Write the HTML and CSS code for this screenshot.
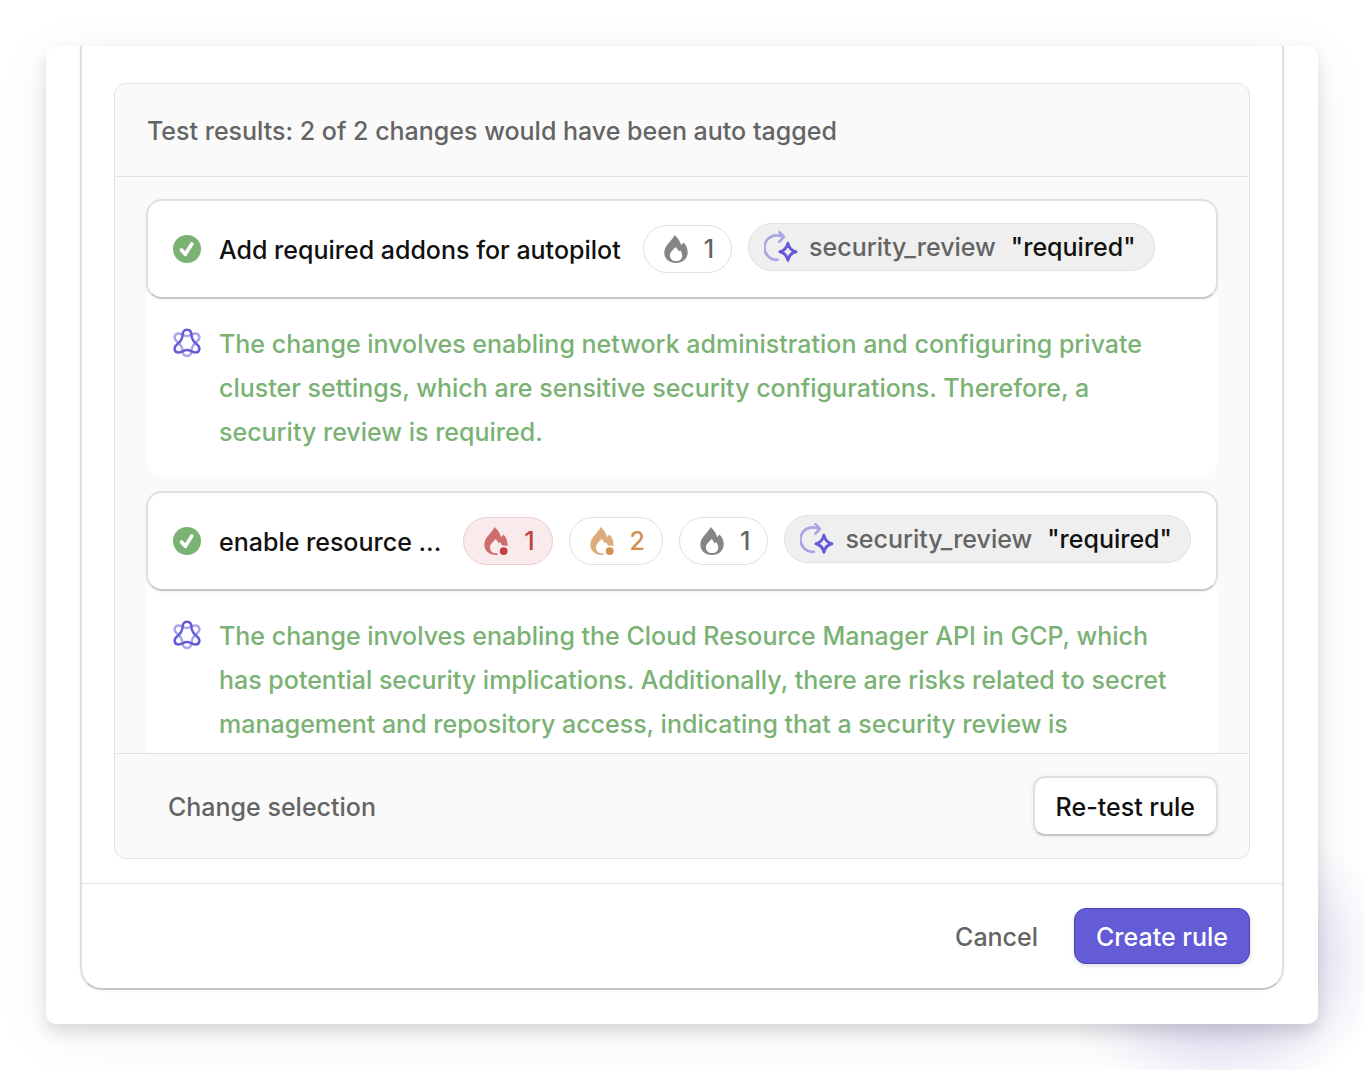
FILE: index.html
```html
<!DOCTYPE html>
<html lang="en">
<head>
<meta charset="utf-8">
<meta name="viewport" content="width=device-width, initial-scale=1">
<title>Create auto tag rule</title>
<link rel="stylesheet" href="styles.css">
</head>
<body>
<svg class="sprite" aria-hidden="true">
  <defs>
    <symbol id="check" viewBox="0 0 28 28">
      <circle cx="14" cy="14" r="14" fill="#7ab274"/>
      <path d="M8.500 15l3.800 4.300 6.500-10.300" fill="none" stroke="#fff" stroke-width="3.600" stroke-linecap="round" stroke-linejoin="round"/>
    </symbol>
    <symbol id="flame" viewBox="0 0 24 28">
      <path fill-rule="evenodd" d="M10.500 0C9.500 4.500 .3 10 .3 17.500C.3 23.500 5 28 12 28S23.700 23.500 23.700 17C23.700 13 22 10 19.500 7.500L17.200 10.300C16.200 6.500 14 3 10.500 0ZM11.800 12L14.800 16.300L16.300 15.300C17.600 17 18.200 18.800 18.200 20.500C18.200 24 16 26 12.200 26S6 24 6 20.500C6 17 9 15 11.800 12Z"/>
    </symbol>
    <symbol id="flame-dot" viewBox="0 0 24 28">
      <path opacity=".75" d="M10.500 0C9.500 4.500 .3 10 .3 17.500C.3 23.500 5 28 12 28L14 27.800L13.500 26.300C9.500 27 6 24.500 6 20.500C6 17 9 15 11.800 12L14.800 16.300L16.300 15.300L18 18.500C20 18.200 22 18.500 23.500 19C23.900 14.500 22 10 19.500 7.500L17.200 10.300C16.200 6.500 14 3 10.500 0Z"/>
      <circle cx="19.700" cy="24.100" r="3.900"/>
    </symbol>
    <symbol id="auto" viewBox="0 0 32 32">
      <g fill="none" stroke-linecap="round" stroke-linejoin="round">
        <path stroke="#aaa5e5" stroke-width="2.500" d="M13 28A11.500 11.500 0 1 1 17.500 6.500M14.500 2L18.800 6.500L14.500 11"/>
        <path stroke="#645bd6" stroke-width="2.800" d="M22.500 12.500Q24 19 30 20.500Q24 22 22.500 28.500Q21 22 15 20.500Q21 19 22.500 12.500Z"/>
      </g>
    </symbol>
    <symbol id="knot" viewBox="0 0 28 30">
      <g fill="none" stroke-width="2.500" stroke-linejoin="round">
        <path stroke="#aba6ec" d="M14 28C17.500 28 18.500 25 18.500 22C19 18 21 16 24 13.500C28 10.500 26.500 5.500 22.500 5.500C19.500 5.500 17.500 8 14 8S8.500 5.500 5.500 5.500C1.500 5.500 0 10.500 4 13.500C7 16 9 18 9.500 22C9.500 25 10.500 28 14 28Z"/>
        <path stroke="#645bd6" d="M14 1.800C17.500 1.800 18.500 4.800 18.500 7.800C19 12 21 14 24 16.500C28 19.500 26.500 24.500 22.500 24.500C19.500 24.500 17.500 22 14 22S8.500 24.500 5.500 24.500C1.500 24.500 0 19.500 4 16.500C7 14 9 12 9.500 7.800C9.500 4.800 10.500 1.800 14 1.800Z"/>
      </g>
    </symbol>
  </defs>
</svg>
<main class="stage">
  <div class="dialog">
    <section class="panel">
      <h1 class="panel-head">Test results: 2 of 2 changes would have been auto tagged</h1>
      <div class="results">
        <article class="result">
          <div class="card">
            <svg class="icon-check"><use href="#check"/></svg>
            <h2 class="title">Add required addons for autopilot</h2>
            <div class="tags">
              <span class="risk"><svg class="icon-flame"><use href="#flame"/></svg>1</span>
              <span class="tag"><svg class="icon-auto"><use href="#auto"/></svg>security_review <b class="value">"required"</b></span>
            </div>
          </div>
          <div class="reason">
            <svg class="icon-knot"><use href="#knot"/></svg>
            <p class="reason-text">The change involves enabling network administration and configuring private cluster settings, which are sensitive security configurations. Therefore, a security review is required.</p>
          </div>
        </article>
        <article class="result">
          <div class="card">
            <svg class="icon-check"><use href="#check"/></svg>
            <h2 class="title">enable resource ...</h2>
            <div class="tags">
              <span class="risk high"><svg class="icon-flame"><use href="#flame-dot"/></svg>1</span>
              <span class="risk medium"><svg class="icon-flame"><use href="#flame-dot"/></svg>2</span>
              <span class="risk"><svg class="icon-flame"><use href="#flame"/></svg>1</span>
              <span class="tag"><svg class="icon-auto"><use href="#auto"/></svg>security_review <b class="value">"required"</b></span>
            </div>
          </div>
          <div class="reason">
            <svg class="icon-knot"><use href="#knot"/></svg>
            <p class="reason-text">The change involves enabling the Cloud Resource Manager API in GCP, which has potential security implications. Additionally, there are risks related to secret management and repository access, indicating that a security review is</p>
          </div>
        </article>
      </div>
      <div class="panel-foot">
        <button class="btn plain" type="button">Change selection</button>
        <button class="btn outline" type="button">Re-test rule</button>
      </div>
    </section>
    <footer class="dialog-foot">
      <button class="btn plain" type="button">Cancel</button>
      <button class="btn primary" type="button">Create rule</button>
    </footer>
  </div>
</main>
</body>
</html>
```
FILE: styles.css
```css
*, *::before, *::after { box-sizing: border-box; }
body {
  margin: 0;
  padding: 46px;
  min-height: 100vh;
  background:
    radial-gradient(ellipse 170px 150px at calc(100% - 144px) calc(100% - 115px), #e2e0f4 45%, #ebeaf7 62%, #f7f6fc 80%, rgba(255, 255, 255, 0) 100%),
    #fff;
  color: #111;
  font: 500 25px/44px Inter, "Liberation Sans", sans-serif;
  overflow-x: hidden;
}
h1, h2, p { margin: 0; font: inherit; }
.sprite { position: absolute; width: 0; height: 0; }
svg { flex: none; }

.stage {
  padding: 0 34px 34px;
  background: #fff;
  border-radius: 10px;
  box-shadow: 0 8px 16px rgba(0, 0, 0, .12), 0 12px 60px rgba(0, 0, 0, .06);
}
.dialog {
  padding-top: 37px;
  border: 2px solid #dfdfdf;
  border-top: 0;
  border-bottom-color: #c6c6c6;
  border-radius: 0 0 22px 22px;
  box-shadow: 0 1px 3px rgba(0, 0, 0, .06);
}
.panel {
  margin: 0 32px 24px;
  border: 1px solid #e2e2e2;
  border-radius: 12px;
  background: #fafafa;
}
.panel-head {
  padding: 25px 32px 23px;
  border-bottom: 1px solid #e2e2e2;
  color: #646464;
}
.results {
  display: flex;
  flex-direction: column;
  gap: 14px;
  height: 576px;
  padding: 22px 31px 0;
  overflow: hidden;
}
.result { flex: none; }
.card {
  position: relative;
  display: flex;
  align-items: center;
  height: 100px;
  padding: 0 24px 0 25px;
  border: 2px solid #e0e0e0;
  border-bottom-color: #c8c8c8;
  border-radius: 16px;
  background: #fff;
  box-shadow: 0 1px 3px rgba(0, 0, 0, .06);
}
.icon-check { width: 28px; height: 28px; margin-right: 18px; }
.title { margin-right: 22px; padding-top: 2px; white-space: nowrap; }
.tags { display: flex; align-items: center; gap: 16px; }
.risk, .tag {
  display: flex;
  align-items: center;
  height: 48px;
  border: 1px solid #e0e0e0;
  border-radius: 24px;
  color: #646464;
  white-space: nowrap;
}
.risk { gap: 16px; padding: 0 17px 0 20px; fill: #858585; }
.high { background: #f9ebec; border-color: #efcdcf; color: #c04144; fill: #c04144; }
.medium { color: #d09050; fill: #d09050; }
.tag { margin-bottom: 4px; padding: 0 18px 0 15px; background: #efefef; }
.value { margin-left: 15px; color: #111; font-weight: inherit; }
.icon-flame { width: 24px; height: 28px; }
.icon-auto { width: 34px; height: 34px; margin-right: 11px; }
.reason {
  display: flex;
  gap: 18px;
  margin: -16px 1px 0;
  padding: 39px 26px 23px;
  border-radius: 0 0 16px 16px;
  background: #fff;
}
.icon-knot { width: 28px; height: 30px; margin-top: 6px; }
.reason-text { color: #7ab274; }

.panel-foot {
  display: flex;
  align-items: center;
  justify-content: space-between;
  padding: 22px 31px;
  border-top: 1px solid #e2e2e2;
}
.dialog-foot {
  display: flex;
  justify-content: flex-end;
  gap: 14px;
  padding: 24px 32px;
  border-top: 1px solid #e2e2e2;
}
.btn {
  height: 56px;
  padding: 2px 21px 0;
  border: 1px solid transparent;
  border-radius: 12px;
  background: none;
  color: #646464;
  font: inherit;
  cursor: pointer;
}
.outline {
  height: 60px;
  border: 2px solid #e0e0e0;
  border-bottom-color: #c8c8c8;
  background: #fff;
  color: #111;
  box-shadow: 0 1px 4px rgba(0, 0, 0, .08);
}
.primary {
  border-color: #4b42b0;
  background: #645bd6;
  color: #fff;
  box-shadow: 0 2px 4px rgba(0, 0, 0, .12);
}
```
